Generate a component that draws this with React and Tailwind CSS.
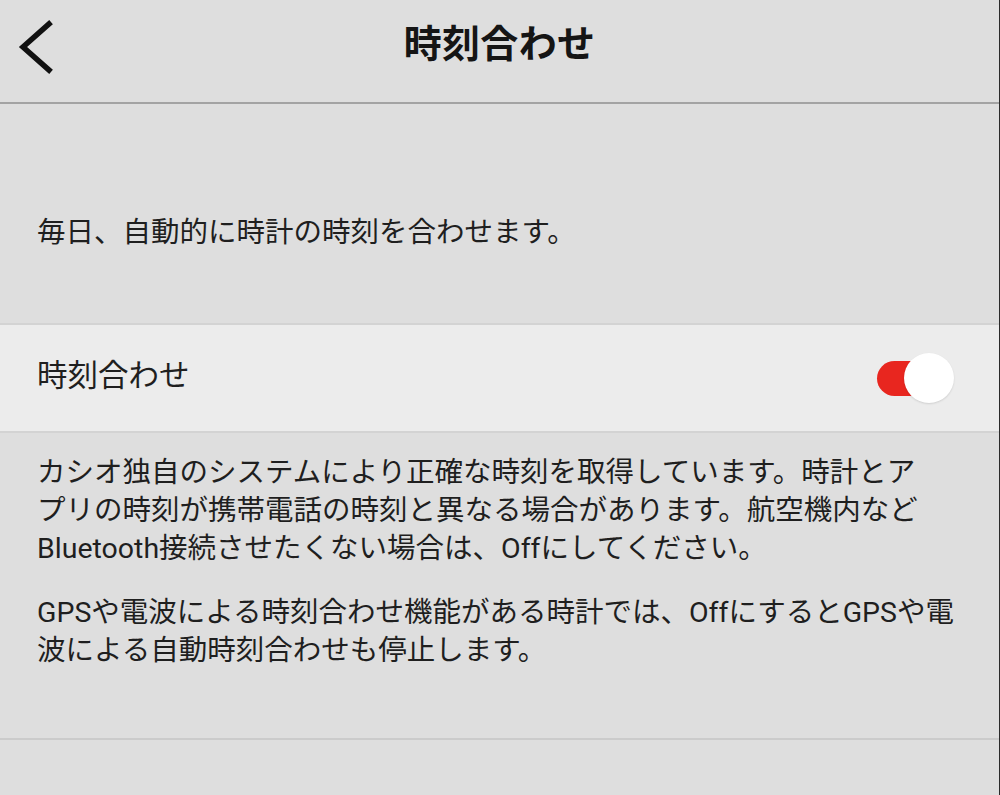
export default function App() {
  const font = { fontFamily: 'Roboto, "Noto Sans CJK JP", "Noto Sans", sans-serif' };
  return (
    <div
      className="w-[1000px] h-[795px] bg-[#dedede] text-[#1f1f1f] flex flex-col border-r border-[#2a2a2a] overflow-hidden"
      style={font}
    >
      {/* Header */}
      <div className="relative h-[104px] shrink-0 border-b-[2px] border-[#a3a3a3] flex items-center justify-center">
        <svg
          className="absolute left-[18px] top-[20px]"
          width="36"
          height="54"
          viewBox="0 0 36 54"
          fill="none"
        >
          <path d="M31 4 L5 27 L31 50" stroke="#111" strokeWidth="5.5" strokeLinecap="square" strokeLinejoin="miter" />
        </svg>
        <div className="text-[38px] font-bold leading-none tracking-[0.3px] text-[#151515] mt-[-15px]">時刻合わせ</div>
      </div>

      {/* Intro */}
      <div className="h-[219px] shrink-0 pl-[37px] pt-[110px]">
        <p className="text-[28.5px] leading-[38px]">毎日、自動的に時計の時刻を合わせます。</p>
      </div>

      {/* Toggle row */}
      <div className="h-[110px] shrink-0 bg-[#ececec] border-t-[2px] border-b-[2px] border-[#d3d3d3] flex items-center justify-between pl-[37px] pr-[45px]">
        <span className="text-[30.5px] leading-none mt-[-4px]">時刻合わせ</span>
        <div className="relative w-[77px] h-[50px] flex items-center">
          <div className="w-[66px] h-[35px] rounded-full bg-[#e8261f]" />
          <div className="absolute right-0 top-0 w-[50px] h-[50px] rounded-full bg-white shadow-[0_1px_2px_rgba(0,0,0,0.12)]" />
        </div>
      </div>

      {/* Description */}
      <div className="h-[307px] shrink-0 pl-[37px] pr-[20px] pt-[21px] border-b-[2px] border-[#cbcbcb]">
        <p className="text-[28.5px] leading-[38px] whitespace-nowrap">
          カシオ独自のシステムにより正確な時刻を取得しています。時計とア
          <br />
          プリの時刻が携帯電話の時刻と異なる場合があります。航空機内など
          <br />
          Bluetooth接続させたくない場合は、Offにしてください。
        </p>
        <p className="text-[28.5px] leading-[38px] whitespace-nowrap mt-[26px]">
          GPSや電波による時刻合わせ機能がある時計では、OffにするとGPSや電
          <br />
          波による自動時刻合わせも停止します。
        </p>
      </div>

      <div className="flex-1" />
    </div>
  );
}
